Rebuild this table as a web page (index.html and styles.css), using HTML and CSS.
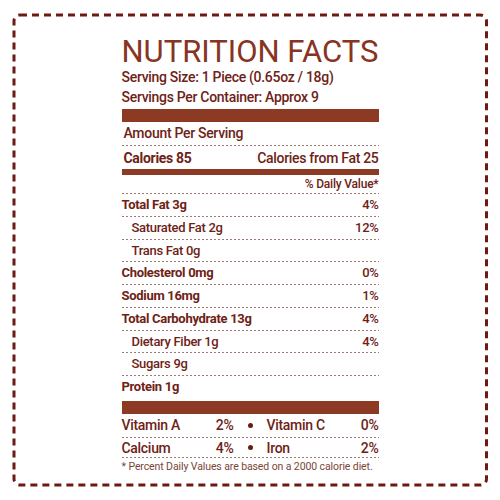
FILE: index.html
```html
<!DOCTYPE html>
<html lang="en">
<head>
    <meta charset="UTF-8">
    <meta name="viewport" content="width=device-width, initial-scale=1.0">
    <title>Nutrition Facts</title>
    <link rel="stylesheet" href="styles.css">
</head>
<body>

<div class="page">
    <svg class="frame" width="500" height="500" viewBox="0 0 500 500">
        <rect x="14" y="15" width="472.5" height="470" rx="6" ry="6"/>
    </svg>

    <div class="label">
        <h1 class="title">NUTRITION FACTS</h1>
        <div class="serving">Serving Size: 1 Piece (0.65oz / 18g)</div>
        <div class="serving">Servings Per Container: Approx 9</div>

        <div class="bar thick"></div>
        <div class="row amount dotted">Amount Per Serving</div>
        <div class="row calories">
            <span class="strong">Calories 85</span>
            <span>Calories from Fat 25</span>
        </div>
        <div class="bar thin"></div>
        <div class="dv dotted">% Daily Value*</div>

        <div class="row nutrient dotted"><span class="strong">Total Fat 3g</span><span>4%</span></div>
        <div class="row nutrient sub dotted"><span>Saturated Fat 2g</span><span>12%</span></div>
        <div class="row nutrient sub dotted"><span>Trans Fat 0g</span><span></span></div>
        <div class="row nutrient dotted"><span class="strong">Cholesterol 0mg</span><span>0%</span></div>
        <div class="row nutrient dotted"><span class="strong">Sodium 16mg</span><span>1%</span></div>
        <div class="row nutrient dotted"><span class="strong">Total Carbohydrate 13g</span><span>4%</span></div>
        <div class="row nutrient sub dotted"><span>Dietary Fiber 1g</span><span>4%</span></div>
        <div class="row nutrient sub dotted"><span>Sugars 9g</span><span></span></div>
        <div class="row nutrient"><span class="strong">Protein 1g</span><span></span></div>

        <div class="bar thick"></div>
        <div class="vitamins first dotted">
            <span>Vitamin A</span><span class="pct">2%</span>
            <span class="dot"></span>
            <span>Vitamin C</span><span class="pct">0%</span>
        </div>
        <div class="vitamins dotted">
            <span>Calcium</span><span class="pct">4%</span>
            <span class="dot"></span>
            <span>Iron</span><span class="pct">2%</span>
        </div>
        <p class="note">* Percent Daily Values are based on a 2000 calorie diet.</p>
    </div>
</div>

</body>
</html>
```
FILE: styles.css
```css
body {
    margin: 0;
    padding: 0;
    background: #fff;
    font-family: Roboto, "Liberation Sans", sans-serif;
    color: #6e2216;
}
.page {
    position: relative;
    width: 500px;
    height: 500px;
}
.frame {
    position: absolute;
    left: 0;
    top: 0;
}
.frame rect {
    fill: none;
    stroke: #6e1a12;
    stroke-width: 3;
    stroke-dasharray: 7 5;
}
.label {
    width: 257px;
    margin: 0 auto;
    padding-top: 36px;
}
.title {
    margin: 0;
    font-size: 31px;
    line-height: 31px;
    font-weight: 400;
    letter-spacing: 0;
    color: #873422;
}
.serving {
    font-size: 14px;
    line-height: 20px;
    font-weight: 500;
    letter-spacing: -0.3px;
}
.bar {
    background: #8c3a24;
}
.bar.thick {
    height: 13px;
    margin-top: 2px;
}
.bar.thin {
    height: 6px;
}
.dotted {
    background: linear-gradient(to right, #9b7b72 2px, transparent 2px) left bottom / 4px 1px repeat-x;
}
.row {
    display: flex;
    justify-content: space-between;
    box-sizing: border-box;
    font-size: 13px;
    font-weight: 500;
    letter-spacing: -0.3px;
}
.strong {
    font-weight: 700;
}
.amount {
    height: 24px;
    font-size: 14px;
    line-height: 22px;
    padding-left: 2px;
}
.calories {
    height: 23px;
    font-size: 14px;
    line-height: 22px;
    padding: 1px 0 0 2px;
}
.dv {
    height: 19px;
    font-size: 12px;
    line-height: 18px;
    font-weight: 500;
    text-align: right;
    letter-spacing: -0.2px;
}
.nutrient {
    height: 22.75px;
    line-height: 19px;
    padding-top: 1px;
}
.nutrient.sub {
    padding-left: 10px;
}
.vitamins {
    display: grid;
    grid-template-columns: 1fr auto 33px 1fr auto;
    align-items: center;
    font-size: 14px;
    font-weight: 500;
    letter-spacing: -0.3px;
    height: 20px;
    line-height: 18px;
}
.vitamins.first {
    height: 24px;
    line-height: 23px;
}
.dot {
    justify-self: center;
    width: 5px;
    height: 5px;
    border-radius: 50%;
    background: #6e1a12;
}
.note {
    margin: 1px 0 0;
    font-size: 10.5px;
    line-height: 16px;
    color: #7a4538;
    letter-spacing: -0.1px;
}
```
